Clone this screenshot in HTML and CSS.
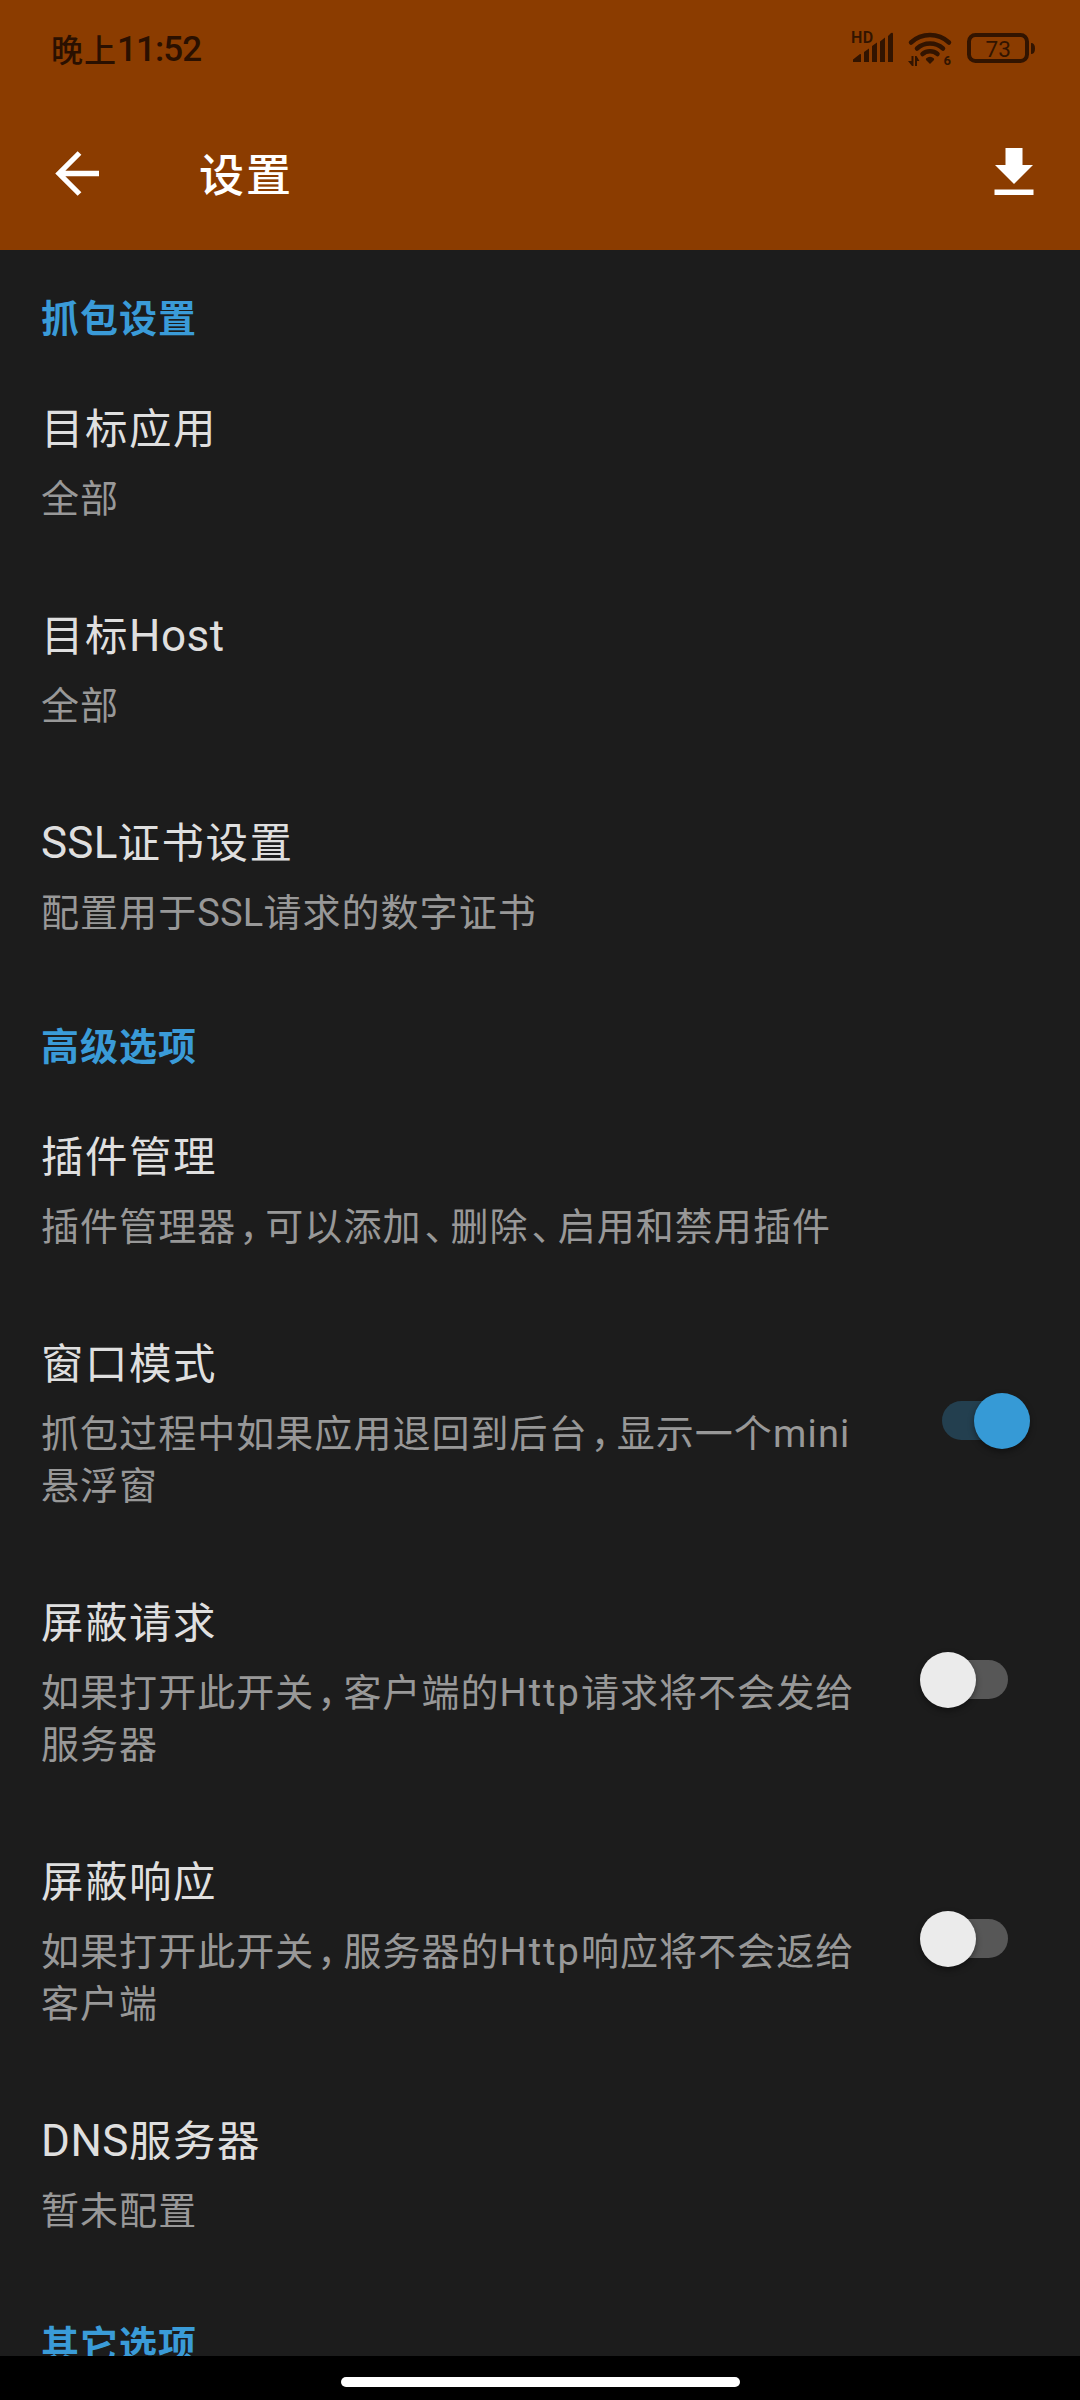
FILE: index.html
```html
<!DOCTYPE html>
<html lang="zh-CN">
<head>
<meta charset="utf-8">
<title>设置</title>
<link rel="stylesheet" href="styles.css">
</head>
<body>
<div class="screen">
  <header class="header">
    <div class="status">
      <div class="clock">晚上<span class="digits">11:52</span></div>
      <div class="status-icons">
        <svg class="signal" width="42" height="34" viewBox="0 0 42 34">
          <text x="-1" y="12" font-size="16" font-weight="600" letter-spacing="0.3">HD</text>
          <path d="M1 31v-2.500l7-5.500q1-.500 1 1v7zM12 31V21l5-3.500v13.500zM20 31V15l5-3.500v19.500zM28 31V10.500l5-4v24.500zM36 31V5l3-3q2-1 2 1v28z"/>
        </svg>
        <svg class="wifi" width="44" height="36" viewBox="0 0 44 36">
          <g class="arcs"><path d="M3 12.500a28 28 0 0 1 38 0"/><path d="M9 18.500a19.500 19.500 0 0 1 26 0"/><path d="M14.500 24a11.500 11.500 0 0 1 15 0"/></g>
          <path d="M18 28.500q4-3.500 8 0q.500 1-.500 2l-3.500 3.500l-3.500-3.500q-1-1-.500-2z"/>
          <path d="M3.500 26h2v10h-1.500l-4-5h3.500zM7 36v-10h1.500l3 5h-2.500v5z"/>
          <text x="35.500" y="35" font-size="13" font-weight="700">6</text>
        </svg>
        <svg class="battery" width="69" height="32" viewBox="0 0 69 32">
          <rect x="2" y="2" width="58" height="26" rx="6.500" fill="none" stroke="#321400" stroke-width="4"/>
          <path d="M64 10q4 0 4 5.500t-4 5.500z"/>
          <text x="18.500" y="23.500" font-size="22.500">73</text>
        </svg>
      </div>
    </div>
    <div class="toolbar">
      <svg class="back" width="46" height="46" viewBox="0 0 46 46"><path d="M45 23.500H5M25.500 3L5 23.500L25.500 44" fill="none" stroke="#fff" stroke-width="5.300"/></svg>
      <h1 class="heading">设置</h1>
      <svg class="download" width="40" height="48" viewBox="0 0 40 48"><path d="M11.500 0h17v17h10.500L20 36L1 17h10.500zM.500 41.500h39v5.500h-39z" fill="#fff"/></svg>
    </div>
  </header>
  <main class="list">
    <h2 class="category">抓包设置</h2>
    <div class="item"><div class="copy"><div class="title">目标应用</div><div class="summary">全部</div></div></div>
    <div class="item"><div class="copy"><div class="title">目标<span class="latin snug">Host</span></div><div class="summary">全部</div></div></div>
    <div class="item"><div class="copy"><div class="title"><span class="latin tight">SSL</span>证书设置</div><div class="summary">配置用于<span class="latin tight">SSL</span>请求的数字证书</div></div></div>
    <h2 class="category">高级选项</h2>
    <div class="item"><div class="copy"><div class="title">插件管理</div><div class="summary">插件管理器<span class="punct">，</span>可以添加<span class="punct">、</span>删除<span class="punct">、</span>启用和禁用插件</div></div></div>
    <div class="item"><div class="copy"><div class="title">窗口模式</div><div class="summary">抓包过程中如果应用退回到后台<span class="punct">，</span>显示一个<span class="latin">mini</span><br>悬浮窗</div></div><div class="switch on"><div class="thumb"></div></div></div>
    <div class="item"><div class="copy"><div class="title">屏蔽请求</div><div class="summary">如果打开此开关<span class="punct">，</span>客户端的<span class="latin wide">Http</span>请求将不会发给<br>服务器</div></div><div class="switch"><div class="thumb"></div></div></div>
    <div class="item"><div class="copy"><div class="title">屏蔽响应</div><div class="summary">如果打开此开关<span class="punct">，</span>服务器的<span class="latin wide">Http</span>响应将不会返给<br>客户端</div></div><div class="switch"><div class="thumb"></div></div></div>
    <div class="item"><div class="copy"><div class="title"><span class="latin snug">DNS</span>服务器</div><div class="summary">暂未配置</div></div></div>
    <h2 class="category">其它选项</h2>
  </main>
  <footer class="nav"><div class="pill"></div></footer>
</div>
</body>
</html>
```
FILE: styles.css
```css
* { box-sizing: border-box; }
body { margin: 0; background: #1c1c1c; font-family: "Noto Sans CJK SC", sans-serif; }
h1, h2 { margin: 0; }
.screen { width: 1080px; height: 2400px; display: flex; flex-direction: column; overflow: hidden; }
.header { height: 250px; flex: none; background: #8b3c00; }
.status { height: 96px; padding: 0 44px 0 51px; display: flex; justify-content: space-between; color: #2a1000; }
.clock { display: flex; align-items: center; font-size: 32px; font-weight: 500; letter-spacing: 1px; line-height: 98px; }
.digits { font-family: Roboto, sans-serif; font-size: 35px; letter-spacing: -0.900px; padding-top: 3px; }
.status-icons { display: flex; padding-top: 31px; fill: #321400; font-family: Roboto, sans-serif; }
.status-icons svg { overflow: visible; }
.signal { margin-right: 14px; }
.wifi { margin-right: 15px; margin-top: -1px; }
.battery { margin-top: 2px; }
.arcs { fill: none; stroke: #321400; stroke-width: 4.500; stroke-linecap: round; }
.toolbar { height: 154px; display: flex; align-items: center; padding: 0 46px 0 54px; color: #fff; }
.back { margin-top: -1px; }
.heading { margin-left: 99px; font-size: 45px; font-weight: 500; letter-spacing: 2px; line-height: 60px; flex: 1; }
.download { margin-top: -2px; }
.list { flex: 1; min-height: 0; overflow: hidden; }
.category { height: 107px; padding: 40px 42px 0 41px; font-size: 38px; line-height: 52px; letter-spacing: 1px; font-weight: 700; color: #3a9bd8; }
.item { display: flex; align-items: flex-start; justify-content: space-between; padding: 39px 50px 42px 41px; }
.copy { white-space: nowrap; }
.title { font-size: 42.500px; line-height: 60px; height: 60px; letter-spacing: 1.500px; color: #dfdfdf; }
.summary { margin-top: 14px; font-size: 38px; line-height: 52px; letter-spacing: 1.050px; color: #989898; }
.latin { font-family: Roboto, sans-serif; line-height: 1; letter-spacing: 1.200px; }
.title .latin { font-size: 44px; }
.tight, .title .tight { letter-spacing: 0.200px; }
.snug { letter-spacing: 0.500px; }
.wide { letter-spacing: 2px; }
.punct { margin-left: 3px; letter-spacing: 7px; font-feature-settings: "halt"; }
.switch { position: relative; flex: none; width: 110px; height: 55px; margin-top: 62px; padding: 8px 22px 8px 6px; }
.switch::before { content: ""; display: block; height: 39px; border-radius: 20px; background: #575757; }
.thumb { position: absolute; top: 0; left: 0; width: 56px; height: 56px; border-radius: 50%; background: #ebebeb; box-shadow: 0 3px 6px rgba(0, 0, 0, .4); }
.on { padding: 8px 6px 8px 22px; }
.on::before { background: #233f4f; }
.on .thumb { left: auto; right: 0; background: #369ad6; }
.nav { flex: none; height: 44px; padding-top: 21px; background: #000; }
.pill { width: 399px; height: 10px; margin: 0 auto; border-radius: 5px; background: #fff; }
```
